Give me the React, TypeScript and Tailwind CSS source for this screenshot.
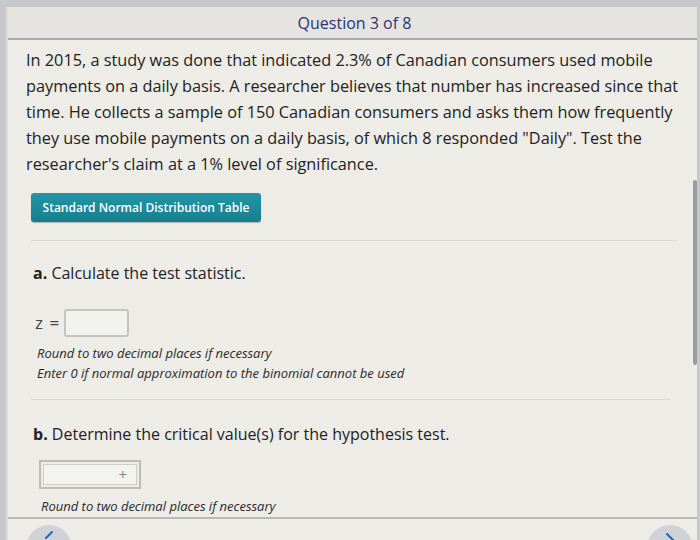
import React from 'react'

const font = { fontFamily: '"Open Sans", "Noto Sans", sans-serif' }

function Divider({ className = '' }: { className?: string }) {
  return <div className={`h-px bg-[#d9d8d2] ${className}`} />
}

export default function App() {
  return (
    <div className="w-[700px] h-[540px] overflow-hidden bg-[#c6c8ca] pt-[7px] pl-[6px] pr-[3px]" style={font}>
      <div className="relative h-full flex flex-col bg-[#edece7] border-l-2 border-[#dcdcda]">
        {/* Header */}
        <div className="h-[33px] shrink-0 flex items-center justify-center bg-[#e5e4e0] border-b-2 border-[#a9a9a9]">
          <span className="text-[16px] text-[#2a3472] pl-[4px]">Question 3 of 8</span>
        </div>

        {/* Body */}
        <div className="flex-1 flex flex-col pl-[18px] pr-[20px]">
          <p className="mt-[7px] text-[16.3px] leading-[26px] text-[#222] whitespace-nowrap">
            In 2015, a study was done that indicated 2.3% of Canadian consumers used mobile<br />
            payments on a daily basis. A researcher believes that number has increased since that<br />
            time. He collects a sample of 150 Canadian consumers and asks them how frequently<br />
            they use mobile payments on a daily basis, of which 8 responded "Daily". Test the<br />
            researcher's claim at a 1% level of significance.
          </p>

          <div className="mt-[16px] pl-[5px]">
            <button className="h-[29px] w-[230px] rounded-[3px] bg-gradient-to-b from-[#2196a6] to-[#177f8e] text-white text-[12px] font-semibold shadow-[0_1px_1px_rgba(0,0,0,0.25)]">
              Standard Normal Distribution Table
            </button>
          </div>

          <Divider className="mt-[18px] ml-[5px]" />

          <div className="mt-[19px] pl-[7px] text-[16px] leading-[26px] text-[#222]">
            <span className="font-bold">a.</span> Calculate the test statistic.
          </div>

          <div className="mt-[23px] pl-[9px] flex items-center gap-[4px]">
            <span className="text-[17px] text-[#444] tracking-[1px]">z =</span>
            <div className="w-[65px] h-[28px] rounded-[3px] border-2 border-[#c4c4c0] bg-[#f2f2ee]" />
          </div>

          <div className="mt-[6px] pl-[11px] text-[13px] leading-[20px] italic text-[#2a2a2a]">
            <div>Round to two decimal places if necessary</div>
            <div>Enter 0 if normal approximation to the binomial cannot be used</div>
          </div>

          <Divider className="mt-[16px] ml-[5px] mr-[6px]" />

          <div className="mt-[21px] pl-[7px] text-[16px] leading-[26px] text-[#222]">
            <span className="font-bold">b.</span> Determine the critical value(s) for the hypothesis test.
          </div>

          <div className="mt-[13px] pl-[13px]">
            <div className="w-[102px] h-[29px] border-2 border-[#bdbdb8] p-[2px]">
              <div className="h-full border border-[#cfcfca] bg-[#f3f3ef] flex items-center justify-end pr-[9px] text-[#888] text-[15px] leading-none">
                +
              </div>
            </div>
          </div>

          <div className="mt-[7px] pl-[15px] text-[13px] leading-[20px] italic text-[#2a2a2a]">
            Round to two decimal places if necessary
          </div>
        </div>

        {/* Footer */}
        <div className="h-[23px] shrink-0 border-t-2 border-[#b9b9b6] flex justify-between px-[18px] pt-[6px] overflow-hidden">
          <div className="w-[46px] h-[46px] rounded-full bg-[#cfd3d8] flex justify-center pt-[4px]">
            <svg width="16" height="16" viewBox="0 0 16 16"><path d="M11 3 L5 9" stroke="#2d5fb3" strokeWidth="2" fill="none" strokeLinecap="round" /></svg>
          </div>
          <div className="w-[46px] h-[46px] rounded-full bg-[#cfd3d8] flex justify-center pt-[6px] -mr-[14px]">
            <svg width="16" height="16" viewBox="0 0 16 16"><path d="M5 3 L11 9" stroke="#2d5fb3" strokeWidth="2" fill="none" strokeLinecap="round" /></svg>
          </div>
        </div>

        {/* Scrollbar */}
        <div className="absolute right-[0px] top-[173px] w-[4px] h-[185px] rounded-full bg-[#9a9ea3]" />
      </div>
    </div>
  )
}
